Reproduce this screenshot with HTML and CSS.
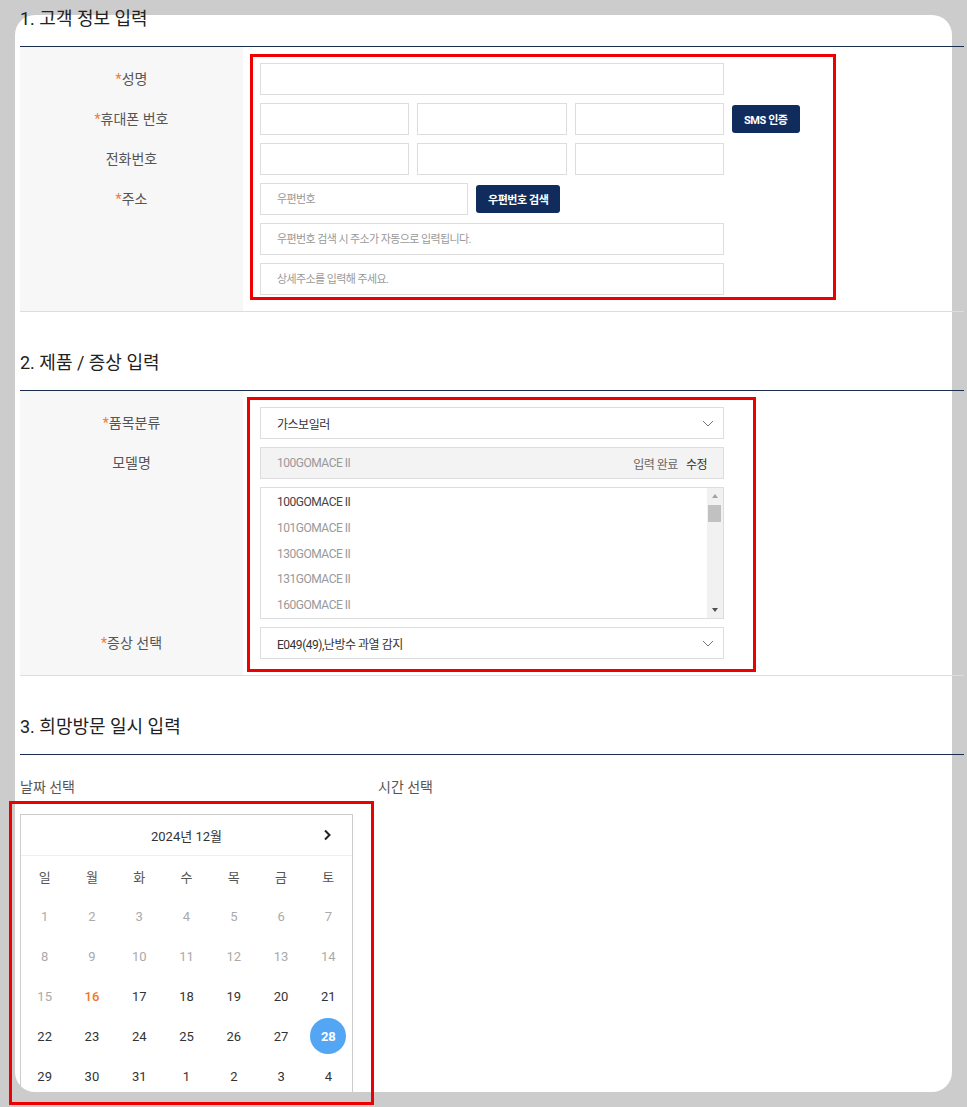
FILE: index.html
```html
<!DOCTYPE html>
<html lang="ko">
<head>
<meta charset="utf-8">
<title>서비스 신청</title>
<link rel="stylesheet" href="styles.css">
</head>
<body>
<div class="page">
  <div class="card"></div>
  <main class="content">
    <section class="sec sec1">
      <h2 class="sec-title">1. 고객 정보 입력</h2>
      <div class="ftable">
        <div class="frow">
          <div class="flabel"><span class="req">*</span>성명</div>
          <div class="fcell"><input class="inp w-full" type="text"></div>
        </div>
        <div class="frow">
          <div class="flabel"><span class="req">*</span>휴대폰 번호</div>
          <div class="fcell row-inline">
            <div class="phone"><input class="inp" type="text"><input class="inp" type="text"><input class="inp" type="text"></div>
            <button class="btn" type="button">SMS 인증</button>
          </div>
        </div>
        <div class="frow">
          <div class="flabel">전화번호</div>
          <div class="fcell">
            <div class="phone"><input class="inp" type="text"><input class="inp" type="text"><input class="inp" type="text"></div>
          </div>
        </div>
        <div class="frow">
          <div class="flabel"><span class="req">*</span>주소</div>
          <div class="fcell stack">
            <div class="row-inline">
              <input class="inp w-zip" type="text" placeholder="우편번호">
              <button class="btn" type="button">우편번호 검색</button>
            </div>
            <input class="inp w-full" type="text" placeholder="우편번호 검색 시 주소가 자동으로 입력됩니다.">
            <input class="inp w-full" type="text" placeholder="상세주소를 입력해 주세요.">
          </div>
        </div>
      </div>
    </section>

    <section class="sec">
      <h2 class="sec-title">2. 제품 / 증상 입력</h2>
      <div class="ftable">
        <div class="frow">
          <div class="flabel"><span class="req">*</span>품목분류</div>
          <div class="fcell">
            <div class="sel"><span>가스보일러</span><svg class="chev" width="12" height="7" viewBox="0 0 12 7"><path d="M1 1l5 5 5-5" fill="none" stroke="#777" stroke-width="1"/></svg></div>
          </div>
        </div>
        <div class="frow">
          <div class="flabel">모델명</div>
          <div class="fcell">
            <div class="model"><span>100GOMACE II</span><span class="model-r"><span class="done">입력 완료</span><span class="edit">수정</span></span></div>
          </div>
        </div>
        <div class="frow">
          <div class="flabel"></div>
          <div class="fcell">
            <div class="list">
              <ul>
                <li class="on">100GOMACE II</li>
                <li>101GOMACE II</li>
                <li>130GOMACE II</li>
                <li>131GOMACE II</li>
                <li>160GOMACE II</li>
              </ul>
              <div class="sbar">
                <div class="sb-btn"><i class="tri-up"></i></div>
                <div class="sb-thumb"></div>
                <div class="sb-fill"></div>
                <div class="sb-btn"><i class="tri-down"></i></div>
              </div>
            </div>
          </div>
        </div>
        <div class="frow">
          <div class="flabel"><span class="req">*</span>증상 선택</div>
          <div class="fcell">
            <div class="sel"><span>E049(49),난방수 과열 감지</span><svg class="chev" width="12" height="7" viewBox="0 0 12 7"><path d="M1 1l5 5 5-5" fill="none" stroke="#777" stroke-width="1"/></svg></div>
          </div>
        </div>
      </div>
    </section>

    <section class="sec">
      <h2 class="sec-title">3. 희망방문 일시 입력</h2>
      <div class="visit">
        <div class="col-date">
          <p class="sub-label">날짜 선택</p>
          <div class="cal">
            <div class="cal-head">
              <span></span>
              <span class="cal-title">2024년 12월</span>
              <span class="cal-next"><svg width="9" height="12" viewBox="0 0 9 12"><path d="M2 1.5l4.5 4.5-4.5 4.5" fill="none" stroke="#222" stroke-width="2"/></svg></span>
            </div>
            <div class="cal-grid">
              <span class="wd">일</span><span class="wd">월</span><span class="wd">화</span><span class="wd">수</span><span class="wd">목</span><span class="wd">금</span><span class="wd">토</span>
              <span class="d off">1</span><span class="d off">2</span><span class="d off">3</span><span class="d off">4</span><span class="d off">5</span><span class="d off">6</span><span class="d off">7</span>
              <span class="d off">8</span><span class="d off">9</span><span class="d off">10</span><span class="d off">11</span><span class="d off">12</span><span class="d off">13</span><span class="d off">14</span>
              <span class="d off">15</span><span class="d today">16</span><span class="d">17</span><span class="d">18</span><span class="d">19</span><span class="d">20</span><span class="d">21</span>
              <span class="d">22</span><span class="d">23</span><span class="d">24</span><span class="d">25</span><span class="d">26</span><span class="d">27</span><span class="d picked"><b>28</b></span>
              <span class="d">29</span><span class="d">30</span><span class="d">31</span><span class="d">1</span><span class="d">2</span><span class="d">3</span><span class="d">4</span>
            </div>
          </div>
        </div>
        <div class="col-time">
          <p class="sub-label">시간 선택</p>
        </div>
      </div>
    </section>

    <div class="mark mark-1"></div>
    <div class="mark mark-2"></div>
    <div class="mark mark-3"></div>
  </main>
</div>
</body>
</html>
```

FILE: styles.css
```css
* { box-sizing: border-box; margin: 0; padding: 0; }
html, body { height: 100%; overflow: hidden; }
body {
  background: #cccccc;
  font-family: Roboto, "Noto Sans CJK KR", sans-serif;
  color: #333;
}
.page { position: relative; display: flow-root; height: 1107px; }
.card {
  position: absolute;
  left: 15px; top: 15px;
  width: 937px; height: 1077px;
  background: #fff;
  border-radius: 20px;
}
.content { position: relative; display: flow-root; margin-left: 20px; width: 944px; }

.sec-title {
  font-size: 18px;
  font-weight: 400;
  line-height: 26px;
  color: #222;
  padding-bottom: 14px;
  border-bottom: 1px solid #1b2d4f;
  margin-top: 38px;
}
.sec1 .sec-title { margin-top: 6px; }

.ftable {
  background: linear-gradient(to right, #f7f7f7 0, #f7f7f7 223px, transparent 223px);
  padding: 12px 0;
  border-bottom: 1px solid #dddddd;
}
.frow { display: grid; grid-template-columns: 223px 1fr; }
.flabel {
  font-size: 14px;
  color: #555;
  line-height: 32px;
  text-align: center;
  padding: 4px 0;
}
.req { color: #f07b36; }
.fcell { padding: 4px 0 4px 17px; }
.row-inline { display: flex; align-items: center; gap: 8px; }
.stack { display: flex; flex-direction: column; gap: 8px; }

.inp {
  display: block;
  height: 32px;
  border: 1px solid #dddddd;
  background: #fff;
  padding: 0 16px;
  font-family: inherit;
  font-size: 11px;
  letter-spacing: -0.6px;
  color: #333;
  outline: none;
}
.inp::placeholder { color: #999; }
.w-full { width: 464px; }
.w-zip { width: 208px; }
.phone { display: grid; grid-template-columns: repeat(3, 1fr); gap: 8px; width: 464px; }
.phone .inp { width: 100%; }

.btn {
  height: 28px;
  background: #0f2c5c;
  color: #fff;
  border: 0;
  border-radius: 3px;
  font-family: inherit;
  font-size: 11px;
  font-weight: 700;
  letter-spacing: -0.04em;
  padding: 0 12px;
}

.sel {
  width: 464px;
  height: 32px;
  border: 1px solid #dddddd;
  background: #fff;
  display: flex;
  align-items: center;
  justify-content: space-between;
  padding: 0 9px 0 16px;
  font-size: 12px;
  letter-spacing: -0.04em;
  color: #333;
}
.chev { display: block; }

.model {
  width: 464px;
  height: 32px;
  border: 1px solid #dddddd;
  background: #f3f3f3;
  display: flex;
  align-items: center;
  justify-content: space-between;
  padding: 0 16px;
  font-size: 12px;
  letter-spacing: -0.04em;
  color: #999;
}
.model-r { display: flex; gap: 8px; }
.done { color: #666; }
.edit { color: #333; }

.list {
  width: 464px;
  height: 132px;
  border: 1px solid #dddddd;
  background: #fff;
  display: flex;
  overflow: hidden;
}
.list ul { flex: 1; list-style: none; padding-top: 2px; }
.list li {
  height: 25.75px;
  line-height: 25.75px;
  padding-left: 16px;
  font-size: 12px;
  letter-spacing: -0.04em;
  color: #999;
}
.list li.on { color: #444; }
.sbar {
  width: 16px;
  background: #f1f1f1;
  display: flex;
  flex-direction: column;
}
.sb-btn { height: 16px; display: flex; align-items: center; justify-content: center; }
.sb-thumb { height: 17px; margin: 1px 2px 0 1px; background: #c1c1c1; }
.sb-fill { flex: 1; }
.tri-up {
  width: 0; height: 0;
  border-left: 3.5px solid transparent;
  border-right: 3.5px solid transparent;
  border-bottom: 4px solid #a3a3a3;
}
.tri-down {
  width: 0; height: 0;
  border-left: 3.5px solid transparent;
  border-right: 3.5px solid transparent;
  border-top: 4px solid #505050;
}

.visit { display: flex; margin-top: 22px; }
.col-date { width: 358px; }
.sub-label { font-size: 14px; line-height: 20px; color: #555; margin-bottom: 17px; }

.cal { width: 333px; border: 1px solid #cccccc; }
.cal-head {
  height: 41px;
  border-bottom: 1px solid #eeeeee;
  display: grid;
  grid-template-columns: 1fr auto 1fr;
  align-items: center;
}
.cal-title { font-size: 13px; color: #333; }
.cal-next { justify-self: end; padding-right: 20px; display: flex; }
.cal-grid { display: grid; grid-template-columns: repeat(7, 1fr); }
.cal-grid span {
  height: 40px;
  display: flex;
  align-items: center;
  justify-content: center;
  font-size: 13px;
}
.wd { color: #555; }
.d { color: #333; }
.d.off { color: #aaaaaa; }
.d.today { color: #ee7530; font-weight: 500; }
.d.picked b {
  width: 36px; height: 36px;
  border-radius: 50%;
  background: #52a6f4;
  color: #fff;
  font-weight: 700;
  display: flex;
  align-items: center;
  justify-content: center;
}

.mark { position: absolute; border: 3px solid #ee0000; pointer-events: none; }
.mark-1 { left: 230px; top: 54px; width: 586px; height: 246px; }
.mark-2 { left: 227px; top: 397px; width: 509px; height: 275px; }
.mark-3 { left: -11px; top: 801px; width: 365px; height: 304px; }
```
